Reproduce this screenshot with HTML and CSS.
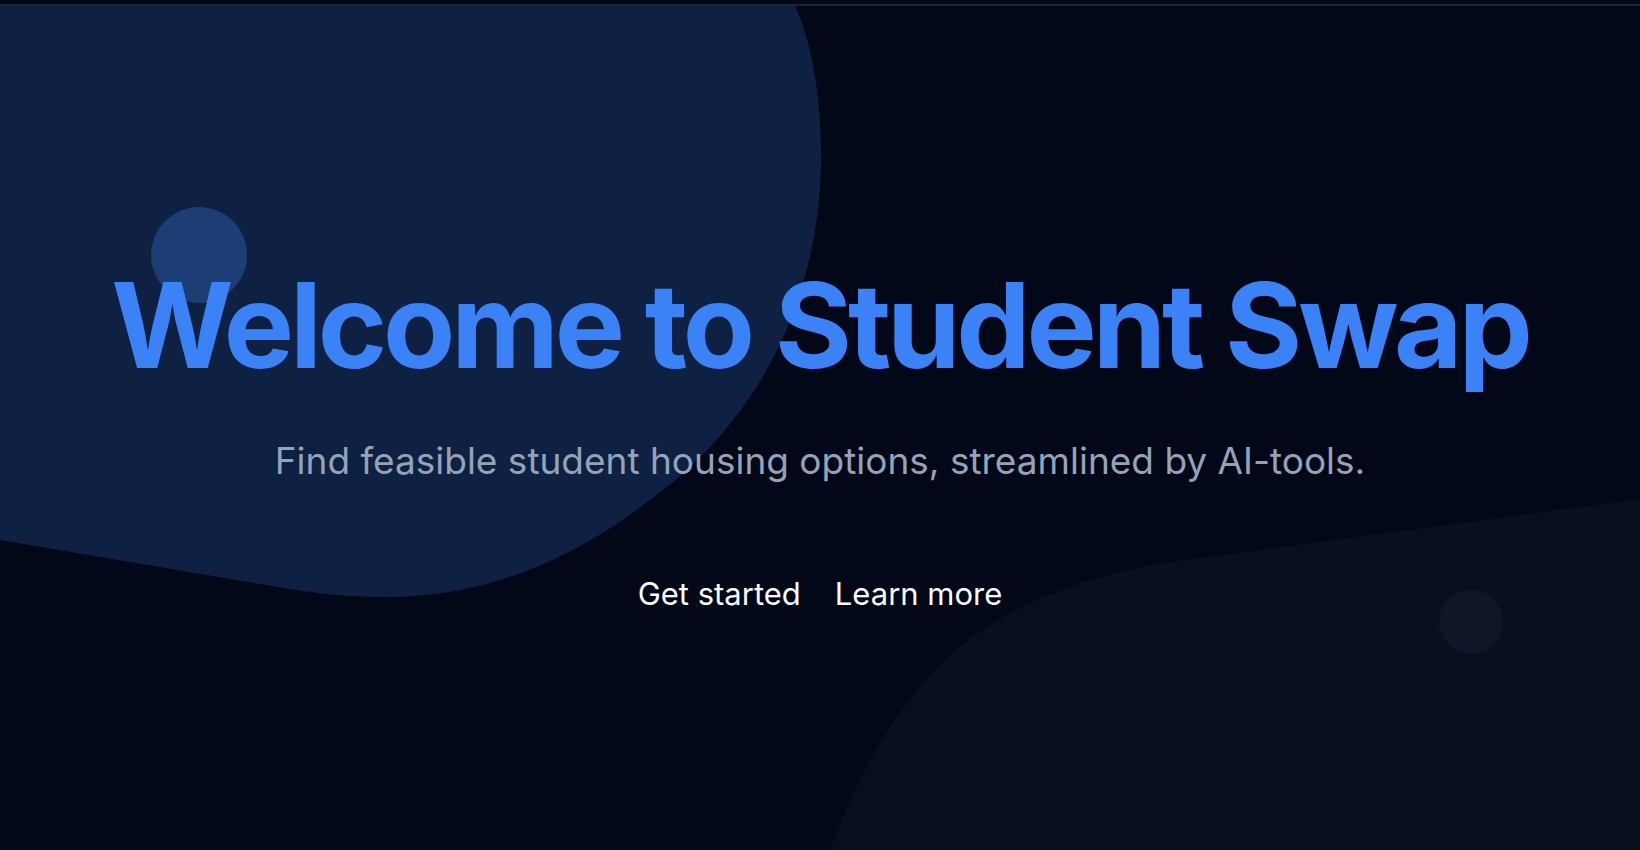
FILE: index.html
```html
<!DOCTYPE html>
<html lang="en">
<head>
<meta charset="utf-8">
<title>Student Swap</title>
<link rel="stylesheet" href="styles.css">
</head>
<body>
<header class="topbar"></header>
<main class="hero">
  <svg class="hero-bg" viewBox="0 6 1640 844" preserveAspectRatio="none" aria-hidden="true">
    <path class="blob-a" d="M0 6 L795 6 C815 50 822 110 821 165 C818 300 760 420 650 500 C560 570 470 597 387 597 C350 597 320 594 290 589 L0 540 Z"/>
    <path class="blob-b" d="M1640 499 L1200 558 C1080 572 1000 610 950 655 C900 700 860 770 830 850 L1640 850 Z"/>
    <circle class="dot-a" cx="199" cy="255" r="48"/>
    <circle class="dot-b" cx="1471" cy="622" r="32"/>
  </svg>
  <div class="hero-content">
    <h1 class="title">Welcome to Student Swap</h1>
    <p class="subtitle">Find feasible student housing options, streamlined by AI-tools.</p>
    <div class="actions">
      <a class="action" href="#">Get started</a>
      <a class="action" href="#">Learn more</a>
    </div>
  </div>
</main>
</body>
</html>
```

FILE: styles.css
```css
* { box-sizing: border-box; }
html, body { margin: 0; padding: 0; }
body {
  background: #020817;
  font-family: Inter, "Noto Sans", "Liberation Sans", sans-serif;
  height: 850px;
  overflow: hidden;
}
.topbar {
  height: 6px;
  border-bottom: 2px solid #1c2437;
  background: #020817;
}
.hero {
  position: relative;
  height: 844px;
  overflow: hidden;
}
.hero-bg {
  position: absolute;
  inset: 0;
  width: 100%;
  height: 100%;
}
.blob-a { fill: #0e2143; }
.blob-b { fill: #0a0f1e; }
.dot-a { fill: #1d3d75; }
.dot-b { fill: #0e1628; }
.hero-content {
  position: relative;
  display: flex;
  flex-direction: column;
  align-items: center;
  padding-top: 260px;
}
.title {
  margin: 0;
  font-size: 118px;
  line-height: 1;
  font-weight: 700;
  letter-spacing: -0.035em;
  color: #3b82f6;
  white-space: nowrap;
}
.subtitle {
  margin: 58px 0 0;
  font-size: 37px;
  line-height: 1;
  color: #94a3b8;
}
.actions {
  margin-top: 99px;
  display: flex;
  gap: 34px;
}
.action {
  font-size: 31px;
  line-height: 1;
  color: #f8fafc;
  text-decoration: none;
}
```
